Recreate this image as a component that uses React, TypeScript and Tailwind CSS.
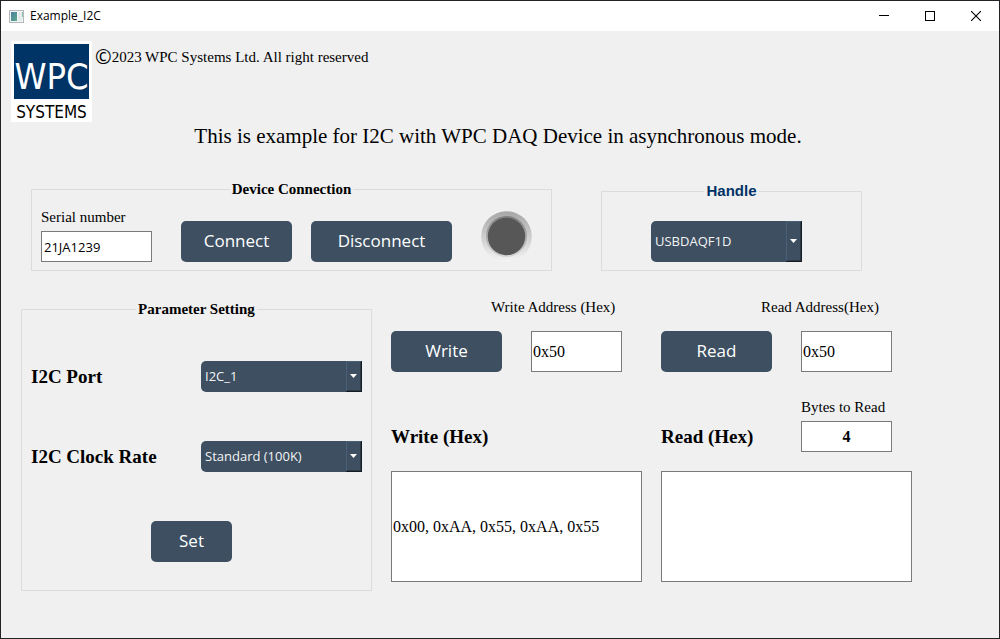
import { useState } from "react";
import type { ReactNode } from "react";

const serif = "font-['Liberation_Serif','Times_New_Roman',serif]";
const sans = "font-['Open_Sans','Segoe_UI',sans-serif]";

function TitleBar() {
  return (
    <header className={`flex h-[30px] items-center bg-white pl-2 text-black ${sans}`}>
      <svg width="15" height="13" viewBox="0 0 15 13" aria-hidden="true">
        <defs>
          <linearGradient id="app-pane" x1="0" y1="0" x2="1" y2="1">
            <stop offset="0" stopColor="#4a7fa0" />
            <stop offset="1" stopColor="#5aa98a" />
          </linearGradient>
        </defs>
        <rect x="0.5" y="0.5" width="14" height="12" fill="#f3f6f6" stroke="#b4b8ba" />
        <rect x="2" y="2" width="6" height="9" fill="url(#app-pane)" />
        <rect x="9" y="2" width="4" height="9" fill="#e3eceb" />
        <rect x="13" y="2" width="1" height="5" fill="#8fbfae" />
      </svg>
      <h1 className="ml-[6px] flex-1 text-[12px] leading-5">Example_I2C</h1>
      <button type="button" aria-label="Minimize" className="flex h-full w-[46px] items-center justify-center">
        <svg width="10" height="10" viewBox="0 0 10 10" shapeRendering="crispEdges">
          <path d="M0 4.5h10" stroke="#000" />
        </svg>
      </button>
      <button type="button" aria-label="Maximize" className="flex h-full w-[46px] items-center justify-center">
        <svg width="10" height="10" viewBox="0 0 10 10" shapeRendering="crispEdges">
          <rect x="0.5" y="0.5" width="9" height="9" fill="none" stroke="#000" />
        </svg>
      </button>
      <button type="button" aria-label="Close" className="flex h-full w-[46px] items-center justify-center">
        <svg width="10" height="10" viewBox="0 0 10 10">
          <path d="M0 0l10 10M10 0L0 10" stroke="#000" strokeWidth="1.1" />
        </svg>
      </button>
    </header>
  );
}

function Logo() {
  return (
    <div className="flex size-[81px] shrink-0 flex-col items-center bg-white pt-[3px] font-['DejaVu_Sans_Condensed','DejaVu_Sans',sans-serif]">
      <div className="flex h-[55px] w-[75px] shrink-0 items-end justify-center bg-[#003366] pb-1 text-[36px] leading-9 text-white">
        WPC
      </div>
      <div className="pt-[3px] text-[17px] leading-5 text-black">SYSTEMS</div>
    </div>
  );
}

function ActionButton({ children, width }: { children: ReactNode; width: string }) {
  return (
    <button
      type="button"
      className={`h-[41px] shrink-0 rounded-[5px] bg-[#3d4f61] pb-px text-[17px] text-white hover:bg-[#4a5f74] ${sans} ${width}`}
    >
      {children}
    </button>
  );
}

function ComboBox({ id, label, options, height }: { id: string; label?: string; options: string[]; height: string }) {
  return (
    <div className="relative min-w-0 flex-1">
      <select
        id={id}
        aria-label={label}
        className={`block w-full appearance-none rounded-l-[5px] bg-[#3d4f61] pr-4 pl-1 text-[13px] text-[#f4f4f4] ${sans} ${height}`}
      >
        {options.map((option) => (
          <option key={option}>{option}</option>
        ))}
      </select>
      <span className="pointer-events-none absolute inset-y-0 right-0 flex w-4 items-center justify-center border-r border-b border-[#151c23] shadow-[inset_1px_1px_0_#4a6078,inset_-1px_-1px_0_#2c3947]">
        <svg width="7" height="4" viewBox="0 0 7 4" aria-hidden="true">
          <path d="M0 0h7L3.5 4z" fill="#fff" />
        </svg>
      </span>
    </div>
  );
}

function GroupBox({
  title,
  legendClass = `text-black ${serif}`,
  className = "",
  children,
}: {
  title: string;
  legendClass?: string;
  className?: string;
  children: ReactNode;
}) {
  return (
    <fieldset className={`min-w-0 border border-[#dcdcdc] ${className}`}>
      <legend className={`mx-auto px-[2px] text-[15px] leading-5 font-bold ${legendClass}`}>{title}</legend>
      {children}
    </fieldset>
  );
}

function StatusLamp() {
  return (
    <svg width="51" height="51" viewBox="0 0 51 51" role="img" aria-label="Disconnected" className="shrink-0">
      <defs>
        <linearGradient id="lamp-rim" x1="0" y1="0" x2="0" y2="1">
          <stop offset="0" stopColor="#a6a6a6" />
          <stop offset="1" stopColor="#f4f4f4" />
        </linearGradient>
        <linearGradient id="lamp-bevel" x1="0" y1="0" x2="0" y2="1">
          <stop offset="0" stopColor="#7d7d7d" />
          <stop offset="1" stopColor="#d8d8d8" />
        </linearGradient>
      </defs>
      <circle cx="25.5" cy="25.5" r="25.3" fill="url(#lamp-rim)" />
      <circle cx="25.5" cy="25.5" r="20.6" fill="url(#lamp-bevel)" />
      <circle cx="25.5" cy="25.5" r="18.7" fill="#575757" />
    </svg>
  );
}

const field = "border border-[#7a7a7a] bg-white text-black";

export default function App() {
  const [serial, setSerial] = useState("21JA1239");
  const [writeAddress, setWriteAddress] = useState("0x50");
  const [readAddress, setReadAddress] = useState("0x50");
  const [byteCount, setByteCount] = useState("4");
  const [writeData, setWriteData] = useState("0x00, 0xAA, 0x55, 0xAA, 0x55");
  const [readData, setReadData] = useState("");

  return (
    <div className={`min-h-screen border border-[#222126] bg-[#f0f0f0] text-black ${serif}`}>
      <TitleBar />
      <main>
        <div className="flex gap-[3px] px-[10px] pt-[10px]">
          <Logo />
          <p className="flex h-8 items-center text-[15px]">
            <span className={`text-[20px] leading-5 font-medium ${sans}`}>©</span>
            2023 WPC Systems Ltd. All right reserved
          </p>
        </div>
        <h2 className="pr-1 text-center text-[21px] leading-7">
          This is example for I2C with WPC DAQ Device in asynchronous mode.
        </h2>

        <div className="mt-[29px] grid grid-cols-[minmax(0,521fr)_minmax(0,261fr)] items-end gap-x-[49px] pr-[137px] pl-[30px]">
          <GroupBox title="Device Connection">
            <div className="flex items-end px-[9px] pt-2 pb-2">
              <div className="mr-[29px] flex w-[111px] flex-col gap-1">
                <label htmlFor="serial" className="text-[15px] leading-5">
                  Serial number
                </label>
                <input
                  id="serial"
                  value={serial}
                  onChange={(e) => setSerial(e.target.value)}
                  className={`h-[31px] w-full px-[2px] text-[13px] ${sans} ${field}`}
                />
              </div>
              <ActionButton width="w-[111px] mr-[19px]">Connect</ActionButton>
              <ActionButton width="w-[141px] mr-[29px]">Disconnect</ActionButton>
              <StatusLamp />
            </div>
          </GroupBox>
          <GroupBox
            title="Handle"
            legendClass="text-[#003366] font-['Liberation_Sans',Arial,sans-serif]"
          >
            <div className="flex pt-5 pr-[59px] pb-2 pl-[49px]">
              <ComboBox id="handle" label="Handle" options={["USBDAQF1D"]} height="h-[41px]" />
            </div>
          </GroupBox>
        </div>

        <div className="mt-7 grid grid-cols-[minmax(0,351fr)_minmax(0,251fr)_minmax(0,251fr)] items-start gap-x-[19px] pr-[87px] pl-5">
          <GroupBox title="Parameter Setting" className="px-[9px] pb-7">
            <div className="flex flex-col gap-[49px] pt-[42px]">
              <div className="flex items-center">
                <label htmlFor="port" className="w-[170px] text-[19px] leading-6 font-bold">
                  I2C Port
                </label>
                <ComboBox id="port" options={["I2C_1"]} height="h-[31px]" />
              </div>
              <div className="flex items-center">
                <label htmlFor="clock" className="w-[170px] text-[19px] leading-6 font-bold">
                  I2C Clock Rate
                </label>
                <ComboBox id="clock" options={["Standard (100K)"]} height="h-[31px]" />
              </div>
              <div className="pl-[120px]">
                <ActionButton width="w-[81px] block">Set</ActionButton>
              </div>
            </div>
          </GroupBox>

          <section className="flex flex-col">
            <label htmlFor="write-address" className="pl-[100px] text-[15px] leading-4">
              Write Address (Hex)
            </label>
            <div className="mt-4 flex gap-[29px]">
              <ActionButton width="w-[111px]">Write</ActionButton>
              <input
                id="write-address"
                value={writeAddress}
                onChange={(e) => setWriteAddress(e.target.value)}
                className={`h-[41px] w-[91px] px-px text-[16px] ${field}`}
              />
            </div>
            <label htmlFor="write-data" className="mt-[50px] text-[19px] leading-[30px] font-bold">
              Write (Hex)
            </label>
            <input
              id="write-data"
              value={writeData}
              onChange={(e) => setWriteData(e.target.value)}
              className={`mt-[19px] h-[111px] w-full px-px text-[16px] ${field}`}
            />
          </section>

          <section className="flex flex-col">
            <label htmlFor="read-address" className="pl-[100px] text-[15px] leading-4">
              Read Address(Hex)
            </label>
            <div className="mt-4 flex gap-[29px]">
              <ActionButton width="w-[111px]">Read</ActionButton>
              <input
                id="read-address"
                value={readAddress}
                onChange={(e) => setReadAddress(e.target.value)}
                className={`h-[41px] w-[91px] px-px text-[16px] ${field}`}
              />
            </div>
            <div className="mt-[27px] flex items-end">
              <label htmlFor="read-data" className="w-[140px] text-[19px] leading-[30px] font-bold">
                Read (Hex)
              </label>
              <div className="flex w-[91px] flex-col gap-[6px]">
                <label htmlFor="byte-count" className="text-[15px] leading-4">
                  Bytes to Read
                </label>
                <input
                  id="byte-count"
                  value={byteCount}
                  onChange={(e) => setByteCount(e.target.value)}
                  className={`h-[31px] w-full text-center text-[16px] font-bold ${field}`}
                />
              </div>
            </div>
            <input
              id="read-data"
              value={readData}
              onChange={(e) => setReadData(e.target.value)}
              className={`mt-[19px] h-[111px] w-full px-px text-[16px] ${field}`}
            />
          </section>
        </div>
      </main>
    </div>
  );
}
